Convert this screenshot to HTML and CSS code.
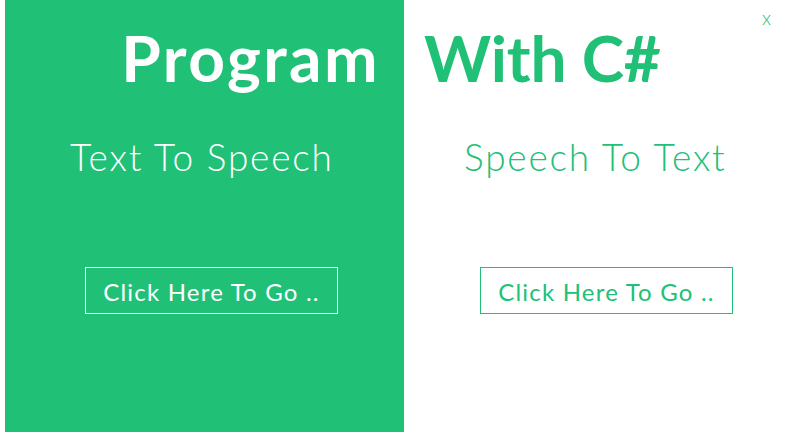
FILE: index.html
```html
<!DOCTYPE html>
<html>
<head>
<meta charset="utf-8">
<link rel="stylesheet" href="styles.css">
</head>
<body>
<div class="app">
  <section class="panel panel-left">
    <h1 class="title title-left">Program</h1>
    <h2 class="sub sub-left">Text To Speech</h2>
    <button class="go go-left">Click Here To Go ..</button>
  </section>
  <section class="panel panel-right">
    <h1 class="title title-right">With C#</h1>
    <h2 class="sub sub-right">Speech To Text</h2>
    <button class="go go-right">Click Here To Go ..</button>
  </section>
  <span class="close">x</span>
</div>
</body>
</html>
```
FILE: styles.css
```css
html, body {
  margin: 0;
  padding: 0;
  background: #ffffff;
}
.app {
  position: relative;
  width: 787px;
  height: 432px;
  display: grid;
  grid-template-columns: 399px 383px;
  padding-left: 5px;
  box-sizing: border-box;
  font-family: "Lato", "DejaVu Sans", sans-serif;
  overflow: hidden;
}
.panel {
  display: flex;
  flex-direction: column;
}
.panel-left {
  background: #20c177;
  color: #ffffff;
}
.panel-right {
  color: #20c177;
}
.title {
  margin: 0;
  padding-top: 26px;
  height: 88px;
  box-sizing: border-box;
  font-size: 64px;
  font-weight: 700;
  line-height: 64px;
  letter-spacing: 2.4px;
  white-space: nowrap;
}
.title-left {
  text-align: right;
  padding-right: 24px;
}
.title-right {
  padding-left: 20px;
  letter-spacing: -0.2px;
}
.sub {
  margin: 0;
  margin-top: 47px;
  font-size: 37px;
  font-weight: 300;
  line-height: 44px;
  letter-spacing: 1.8px;
  white-space: nowrap;
}
.sub-left { padding-left: 65px; }
.sub-right { padding-left: 60px; }
.go {
  margin-top: 88px;
  width: 253px;
  height: 47px;
  background: transparent;
  font-family: inherit;
  font-size: 24px;
  font-weight: 400;
  letter-spacing: 1.2px;
  padding: 2px 0 0;
  cursor: pointer;
}
.go-left {
  margin-left: 80px;
  border: 1px solid #e8fff4;
  color: #ffffff;
}
.go-right {
  margin-left: 76px;
  border: 1px solid #20c177;
  color: #20c177;
}
.close {
  position: absolute;
  top: 6px;
  left: 762px;
  font-size: 19px;
  font-weight: 300;
  color: #20c177;
}
```
